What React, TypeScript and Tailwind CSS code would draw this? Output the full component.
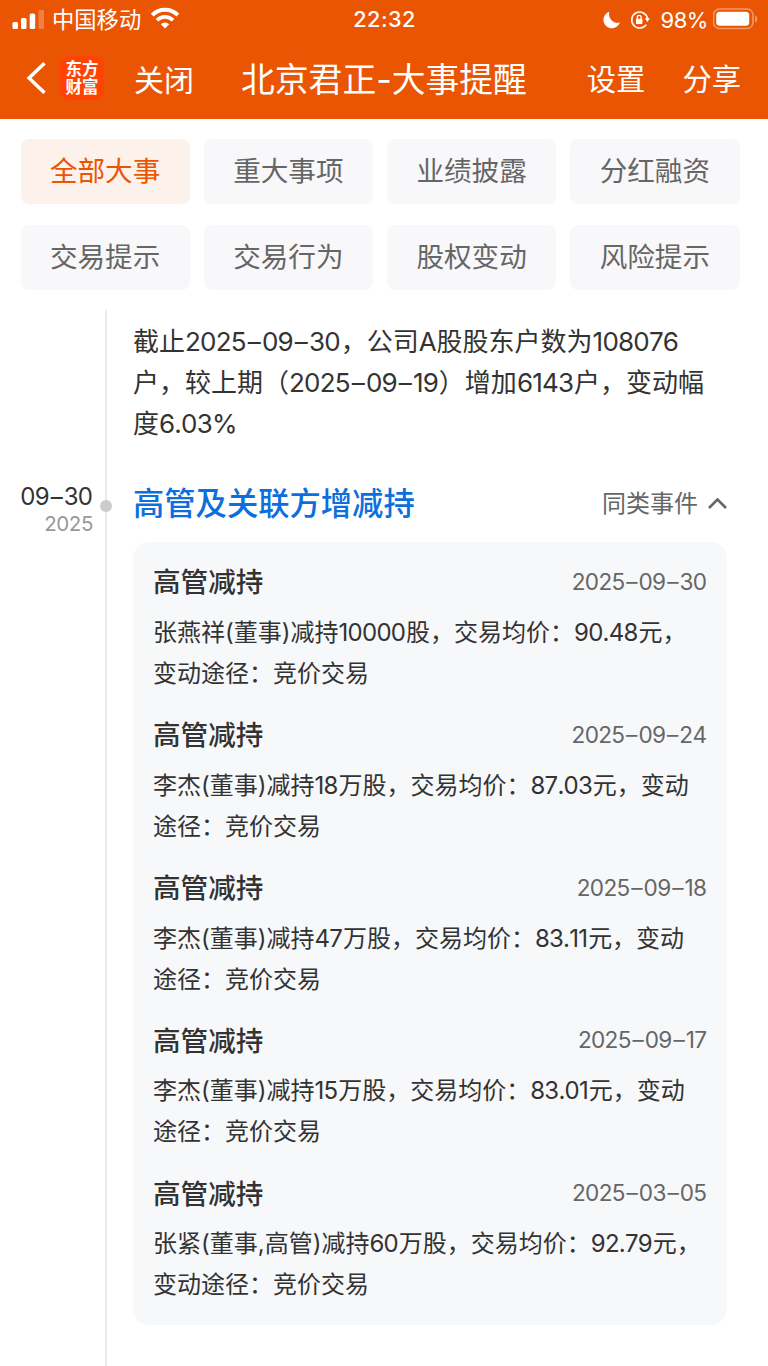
import clsx from "clsx";

type Trade = {
  date: string;
  text: string;
};

const tabs = ["全部大事", "重大事项", "业绩披露", "分红融资", "交易提示", "交易行为", "股权变动", "风险提示"];

const trades: Trade[] = [
  { date: "2025–09–30", text: "张燕祥(董事)减持10000股，交易均价：90.48元，\n变动途径：竞价交易" },
  { date: "2025–09–24", text: "李杰(董事)减持18万股，交易均价：87.03元，变动\n途径：竞价交易" },
  { date: "2025–09–18", text: "李杰(董事)减持47万股，交易均价：83.11元，变动\n途径：竞价交易" },
  { date: "2025–09–17", text: "李杰(董事)减持15万股，交易均价：83.01元，变动\n途径：竞价交易" },
  { date: "2025–03–05", text: "张紧(董事,高管)减持60万股，交易均价：92.79元，\n变动途径：竞价交易" },
];

// Digits are set a little tighter than the Chinese text, dashes a little looser
const Mixed = ({ text }: { text: string }) => (
  <>
    {text.split(/([0-9A-Za-z.%]+|–)/).map((part, i) => {
      if (i % 2 === 0) return part;
      return (
        <span key={i} className={part === "–" ? "mx-[0.045em]" : "mr-[0.03em] tracking-[-0.03em] [font-kerning:none]"}>
          {part}
        </span>
      );
    })}
  </>
);

const StatusBar = () => (
  <div className="flex h-10 items-center pl-3 pr-[9px]">
    <div className="flex flex-1 items-center">
      <svg width="32" height="20" viewBox="0 0 32 20" fill="#fff">
        <rect x="0.5" y="12" width="5.5" height="7" rx="1.5" />
        <rect x="9" y="8" width="5.5" height="11" rx="1.5" />
        <rect x="17.7" y="3.5" width="5.5" height="15.5" rx="1.5" />
        <rect x="26.5" y="-0.5" width="5.5" height="19.5" rx="1.5" opacity="0.25" />
      </svg>
      <span className="ml-2 text-[22.3px] leading-none">中国移动</span>
      <svg className="-mt-[3px] ml-[9px]" width="30" height="22" viewBox="0 0 30 22" fill="none" stroke="#fff">
        <path d="M2.2 8.2a18 18 0 0 1 25.6 0" strokeWidth="4" />
        <path d="M7 13.2a11.3 11.3 0 0 1 16 0" strokeWidth="3.7" />
        <path d="M15 21.5l-4.2-4.2a6 6 0 0 1 8.4 0z" fill="#fff" stroke="none" />
      </svg>
    </div>
    <span className="mr-0.5 text-[21.7px] font-medium leading-none tracking-[0.02em]">22:32</span>
    <div className="flex flex-1 items-center justify-end">
      <svg width="18" height="18" viewBox="0 0 19 19" fill="#fff">
        <path d="M6.8.8a8.9 8.9 0 1 0 11 11.4A9 9 0 0 1 6.8.8z" />
      </svg>
      <svg className="ml-[9px]" width="20" height="20" viewBox="0 0 20 20" fill="none" stroke="#fff">
        <path d="M16.3 14.6a8 8 0 1 1 1.3-6" strokeWidth="1.6" />
        <path d="M14.8 8.3h5l-2.4 3.6z" fill="#fff" stroke="none" />
        <rect x="6" y="8.8" width="6.4" height="5.2" rx="0.8" fill="#fff" stroke="none" />
        <path d="M7.3 9V7.2a1.9 1.9 0 0 1 3.8 0V9" strokeWidth="1.3" />
      </svg>
      <span className="ml-2.5 text-[22px] leading-none tracking-[-0.02em]">98%</span>
      <svg className="-mt-[3px] ml-[5px]" width="46" height="22" viewBox="0 0 46 22" fill="#fff">
        <rect x="0.5" y="1" width="39.5" height="19.5" rx="6" fill="none" stroke="#fff" strokeWidth="1.6" opacity="0.4" />
        <rect x="3.2" y="3.7" width="33" height="14" rx="3.5" />
        <path d="M42.1 7.4c3 1 3 6 0 7z" opacity="0.4" />
      </svg>
    </div>
  </div>
);

const NavBar = () => (
  <div className="flex h-[79px] items-center pb-[3px] pl-[27px] pr-[27px] text-[29.3px] leading-none">
    <svg width="19" height="32" viewBox="0 0 19 32" fill="none" stroke="#fff" strokeWidth="3.5">
      <path d="M17.5 1.2L2 16l15.5 14.8" />
    </svg>
    <div className="ml-3.5 flex h-11 w-11 flex-col items-center justify-center rounded-[9px] bg-[#ff4304] text-[16.5px] font-bold leading-[18px]">
      <span>东方</span>
      <span>财富</span>
    </div>
    <span className="ml-[30px] pt-[3px] text-[30px]">关闭</span>
    <h1 className="ml-[47px] pt-[3px] text-[33.8px]">北京君正-大事提醒</h1>
    <span className="ml-auto pt-[3px]">设置</span>
    <span className="ml-[37px] pt-[3px]">分享</span>
  </div>
);

const Tabs = () => (
  <div className="grid grid-cols-4 gap-x-3.5 gap-y-[21px] pl-[20.5px] pr-[28.5px] pt-5">
    {tabs.map((tab, i) => (
      <button
        key={tab}
        className={clsx(
          "flex h-[65px] items-center justify-center rounded-lg text-[27.6px]",
          i === 0 ? "bg-[#fdf1eb] text-[#ea5504]" : "bg-[#f8f8fa] text-[#666]",
        )}
      >
        {tab}
      </button>
    ))}
  </div>
);

const TradeItem = ({ date, text }: Trade) => (
  <div>
    <div className="flex h-10 items-center justify-between">
      <h3 className="pt-0.5 text-[27.6px] font-medium">高管减持</h3>
      <span className="text-[22.6px] text-[#666]">
        <Mixed text={date} />
      </span>
    </div>
    <p className="mt-2.5 whitespace-pre text-[24px] leading-[41px]">
      <Mixed text={text} />
    </p>
  </div>
);

export default function App() {
  return (
    <div
      className="flex h-[1366px] w-[768px] flex-col overflow-hidden bg-white text-[#333]"
      style={{ fontFamily: 'Inter, "Noto Sans CJK SC", sans-serif' }}
    >
      <header className="h-[119px] shrink-0 bg-[#ea5504] text-white">
        <StatusBar />
        <NavBar />
      </header>

      <Tabs />

      <main className="mt-5 flex flex-1">
        <div className="w-[105px] shrink-0 pr-3 pt-[173px] text-right">
          <div className="text-[24px] leading-7">
            <Mixed text="09–30" />
          </div>
          <div className="text-[20.5px] leading-[26px] tracking-[-0.02em] text-[#999]">2025</div>
        </div>

        <div className="relative flex-1 border-l-2 border-[#ebebeb] pl-[26px] pr-[41px] pt-[11px]">
          <span className="absolute -left-[7.5px] top-[190px] h-3 w-3 rounded-full bg-[#ccc]" />

          <p className="whitespace-pre text-[26px] leading-[41px]">
            <Mixed text={"截止2025–09–30，公司A股股东户数为108076\n户，较上期（2025–09–19）增加6143户，变动幅\n度6.03%"} />
          </p>

          <div className="mt-[38px] flex h-11 items-center">
            <h2 className="pt-px text-[31.3px] font-medium text-[#0c6fdd]">高管及关联方增减持</h2>
            <span className="ml-auto text-[24px] text-[#666]">同类事件</span>
            <svg className="ml-2.5" width="19" height="12" viewBox="0 0 19 12" fill="none" stroke="#666" strokeWidth="2.6">
              <path d="M1 10l8.5-8.5 8.5 8.5" />
            </svg>
          </div>

          <div className="mt-4 flex flex-col gap-[20.8px] rounded-2xl bg-[#f7f8fa] p-5">
            {trades.map((trade) => (
              <TradeItem key={trade.date} {...trade} />
            ))}
          </div>
        </div>
      </main>
    </div>
  );
}
